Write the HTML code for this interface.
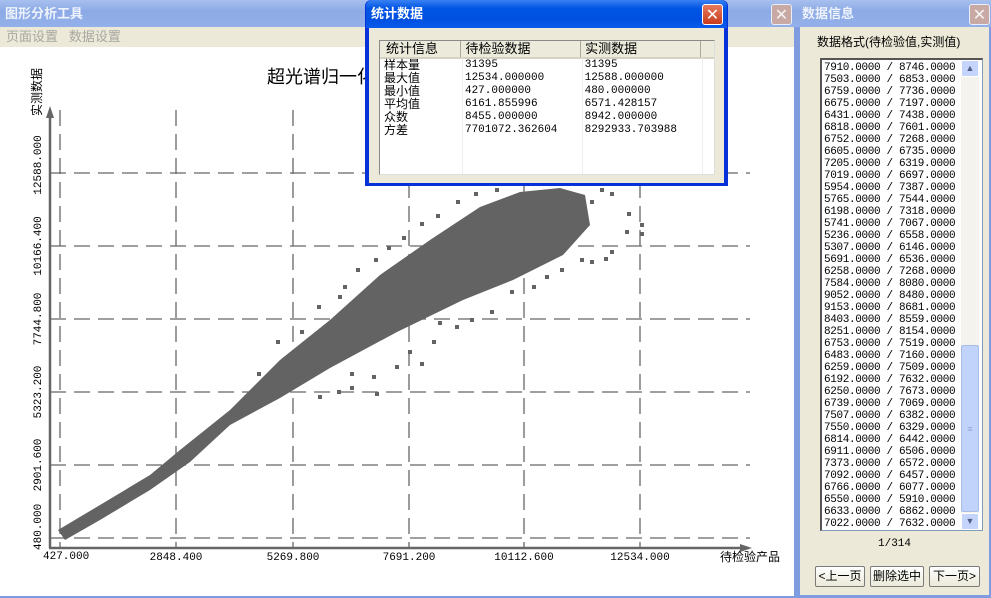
<!DOCTYPE html>
<html><head><meta charset="utf-8"><style>
*{margin:0;padding:0;box-sizing:border-box}
body{width:991px;height:598px;position:relative;overflow:hidden;background:#ece9d8;font-family:"Liberation Sans","Noto Sans CJK SC",sans-serif;}
.abs{position:absolute}
.tb{font-weight:bold;color:#fff;font-size:13px;padding-left:5px;line-height:27px;}
.inact{background:linear-gradient(#a8c0ef,#8daae6 40%,#93b0ea);color:#eef3fc}
.act{background:linear-gradient(#3a81f3,#0055e5 30%,#0050e0 70%,#0a5bec);}
.xb{position:absolute;width:21px;height:21px;border-radius:3px;border:1px solid #fff;color:#fff;font-size:16px;line-height:19px;text-align:center;font-weight:bold;font-family:"DejaVu Sans",sans-serif}
.mono{font-family:"Liberation Mono","Noto Sans CJK SC",monospace;}
table{border-collapse:collapse}
.btn{position:absolute;top:566px;height:21px;border:1px solid #7a7a7a;border-radius:2px;background:linear-gradient(#fff,#ece9d8);font-size:12px;text-align:center;line-height:19px}
</style></head><body>
<div class="abs" style="left:0;top:0;width:797px;height:598px;background:#7f9ce0"></div>
<div class="abs tb inact" style="left:0;top:0;width:797px;height:27px;">图形分析工具</div>
<div class="xb" style="left:771px;top:4px;background:#c9a9a4;border-color:#e8eefa;color:#f4f4f4">✕</div>
<div class="abs" style="left:0;top:27px;width:794px;height:20px;background:#ece9d8;color:#a7a6a0;font-size:13px;line-height:20px;padding-left:6px">页面设置&nbsp;&nbsp;&nbsp;数据设置</div>
<div class="abs" style="left:0;top:47px;width:794px;height:549px;background:#fff"></div>
<svg class="abs" style="left:0;top:0" width="794" height="596">
<g stroke="#666" stroke-width="1.3" stroke-dasharray="16,8" fill="none">
<line x1="50" y1="173" x2="750" y2="173"/><line x1="50" y1="246" x2="750" y2="246"/><line x1="50" y1="319" x2="750" y2="319"/><line x1="50" y1="392" x2="750" y2="392"/><line x1="50" y1="465" x2="750" y2="465"/><line x1="50" y1="538" x2="750" y2="538"/>
<line x1="60" y1="110" x2="60" y2="548"/><line x1="176" y1="110" x2="176" y2="548"/><line x1="293" y1="110" x2="293" y2="548"/><line x1="409" y1="110" x2="409" y2="548"/><line x1="524" y1="110" x2="524" y2="548"/><line x1="640" y1="110" x2="640" y2="548"/>
</g>
<g stroke="#666" stroke-width="2.5"><line x1="50" y1="112" x2="50" y2="548"/><line x1="49" y1="548" x2="748" y2="548"/></g>
<polygon points="50,106 46,118 54,118" fill="#666"/><polygon points="752,548 740,544 740,552" fill="#666"/>
<polygon fill="#636363" points="58,530 100,505 150,475 180,450 230,410 280,360 330,320 380,275 430,240 480,207 520,192 560,188 585,195 590,225 563,255 513,280 463,300 397,332 330,368 280,398 230,425 190,462 150,490 100,520 65,540"/>
<g fill="#636363">
<rect x="276" y="340" width="4" height="4"/><rect x="300" y="330" width="4" height="4"/><rect x="317" y="305" width="4" height="4"/><rect x="338" y="295" width="4" height="4"/><rect x="356" y="268" width="4" height="4"/><rect x="343" y="285" width="4" height="4"/><rect x="374" y="258" width="4" height="4"/><rect x="387" y="246" width="4" height="4"/><rect x="402" y="236" width="4" height="4"/><rect x="420" y="222" width="4" height="4"/><rect x="436" y="214" width="4" height="4"/><rect x="456" y="200" width="4" height="4"/><rect x="474" y="192" width="4" height="4"/><rect x="495" y="188" width="4" height="4"/>
<rect x="590" y="200" width="4" height="4"/><rect x="600" y="188" width="4" height="4"/><rect x="610" y="192" width="4" height="4"/><rect x="625" y="230" width="4" height="4"/><rect x="627" y="212" width="4" height="4"/><rect x="640" y="223" width="4" height="4"/><rect x="604" y="257" width="4" height="4"/><rect x="580" y="258" width="4" height="4"/><rect x="590" y="260" width="4" height="4"/><rect x="610" y="250" width="4" height="4"/><rect x="560" y="268" width="4" height="4"/><rect x="545" y="275" width="4" height="4"/><rect x="532" y="285" width="4" height="4"/>
<rect x="490" y="310" width="4" height="4"/><rect x="470" y="318" width="4" height="4"/><rect x="455" y="325" width="4" height="4"/><rect x="432" y="340" width="4" height="4"/><rect x="438" y="321" width="4" height="4"/><rect x="408" y="350" width="4" height="4"/><rect x="395" y="365" width="4" height="4"/><rect x="420" y="362" width="4" height="4"/><rect x="372" y="375" width="4" height="4"/><rect x="350" y="372" width="4" height="4"/><rect x="375" y="392" width="4" height="4"/><rect x="337" y="390" width="4" height="4"/><rect x="318" y="395" width="4" height="4"/><rect x="350" y="386" width="4" height="4"/><rect x="257" y="372" width="4" height="4"/><rect x="273" y="385" width="4" height="4"/><rect x="510" y="290" width="4" height="4"/><rect x="450" y="300" width="4" height="4"/><rect x="640" y="232" width="4" height="4"/>
</g>
<g font-family="Liberation Mono,monospace" font-size="11" fill="#000">
<text x="43" y="559" text-anchor="start">427.000</text>
<text x="176" y="560" text-anchor="middle">2848.400</text><text x="293" y="560" text-anchor="middle">5269.800</text><text x="409" y="560" text-anchor="middle">7691.200</text><text x="524" y="560" text-anchor="middle">10112.600</text><text x="640" y="560" text-anchor="middle">12534.000</text>
<text transform="translate(41,550) rotate(-90)">480.000</text>
<text transform="translate(41,465) rotate(-90)" text-anchor="middle">2901.600</text>
<text transform="translate(41,392) rotate(-90)" text-anchor="middle">5323.200</text>
<text transform="translate(41,319) rotate(-90)" text-anchor="middle">7744.800</text>
<text transform="translate(41,246) rotate(-90)" text-anchor="middle">10166.400</text>
<text transform="translate(41,165) rotate(-90)" text-anchor="middle">12588.000</text>
</g>
<text x="720" y="561" font-size="12" font-family="Liberation Sans,Noto Sans CJK SC,sans-serif">待检验产品</text>
<text transform="translate(41,92) rotate(-90)" text-anchor="middle" font-size="12" font-family="Liberation Sans,Noto Sans CJK SC,sans-serif">实测数据</text>
<text x="267" y="83" font-size="18" font-family="Liberation Sans,Noto Sans CJK SC,sans-serif">超光谱归一化</text>
</svg>
<div class="abs" style="left:365px;top:0;width:363px;height:186px;background:#0831d9;border-radius:6px 6px 0 0"></div>
<div class="abs tb act" style="left:366px;top:0;width:361px;height:28px;border-radius:6px 6px 0 0;line-height:28px">统计数据</div>
<div class="xb" style="left:702px;top:4px;background:linear-gradient(#e77a5e,#c83b1c)">✕</div>
<div class="abs" style="left:369px;top:28px;width:355px;height:155px;background:#ece9d8"></div>
<div class="abs" style="left:379px;top:40px;width:336px;height:135px;background:#fff;border:1px solid #8a8a8a;border-right-color:#ddd;border-bottom-color:#ddd;overflow:hidden">
<table style="font-size:12px;line-height:12px">
<tr style="height:17px;background:#ebeadb;font-size:13px"><td style="width:82px;padding-left:6px;border-right:1px solid #aca899;border-bottom:2px solid #d6d2c2">统计信息</td><td style="width:120px;padding-left:4px;border-right:1px solid #aca899;border-bottom:2px solid #d6d2c2">待检验数据</td><td style="width:120px;padding-left:4px;border-right:1px solid #aca899;border-bottom:2px solid #d6d2c2">实测数据</td><td style="width:14px;border-bottom:2px solid #d6d2c2"></td></tr>
<tr style="height:13px"><td style="padding-left:4px">样本量</td><td class="mono" style="padding-left:4px;font-size:11px">31395</td><td class="mono" style="padding-left:4px;font-size:11px">31395</td><td></td></tr>
<tr style="height:13px"><td style="padding-left:4px">最大值</td><td class="mono" style="padding-left:4px;font-size:11px">12534.000000</td><td class="mono" style="padding-left:4px;font-size:11px">12588.000000</td><td></td></tr>
<tr style="height:13px"><td style="padding-left:4px">最小值</td><td class="mono" style="padding-left:4px;font-size:11px">427.000000</td><td class="mono" style="padding-left:4px;font-size:11px">480.000000</td><td></td></tr>
<tr style="height:13px"><td style="padding-left:4px">平均值</td><td class="mono" style="padding-left:4px;font-size:11px">6161.855996</td><td class="mono" style="padding-left:4px;font-size:11px">6571.428157</td><td></td></tr>
<tr style="height:13px"><td style="padding-left:4px">众数</td><td class="mono" style="padding-left:4px;font-size:11px">8455.000000</td><td class="mono" style="padding-left:4px;font-size:11px">8942.000000</td><td></td></tr>
<tr style="height:13px"><td style="padding-left:4px">方差</td><td class="mono" style="padding-left:4px;font-size:11px">7701072.362604</td><td class="mono" style="padding-left:4px;font-size:11px">8292933.703988</td><td></td></tr>
</table>
<div class="abs" style="left:82px;top:17px;width:1px;height:120px;background:#eee"></div>
<div class="abs" style="left:202px;top:17px;width:1px;height:120px;background:#eee"></div>
<div class="abs" style="left:322px;top:17px;width:1px;height:120px;background:#eee"></div>
</div>
<div class="abs" style="left:797px;top:0;width:194px;height:598px;background:#7f9ce0"></div>
<div class="abs tb inact" style="left:797px;top:0;width:194px;height:27px">数据信息</div>
<div class="xb" style="left:969px;top:4px;background:#c9a9a4;border-color:#e8eefa;color:#f4f4f4">✕</div>
<div class="abs" style="left:800px;top:27px;width:189px;height:568px;background:#ece9d8"></div>
<div class="abs" style="left:817px;top:33px;font-size:12px">数据格式(待检验值,实测值)</div>
<div class="abs mono" style="left:820px;top:58px;width:163px;height:473px;background:#fff;border:1px solid #7f9db9;border-left:2px solid #555;border-top:2px solid #555;font-size:11px;line-height:12px;padding:2px 0 0 2px;white-space:pre;letter-spacing:-0.35px">7910.0000 / 8746.0000
7503.0000 / 6853.0000
6759.0000 / 7736.0000
6675.0000 / 7197.0000
6431.0000 / 7438.0000
6818.0000 / 7601.0000
6752.0000 / 7268.0000
6605.0000 / 6735.0000
7205.0000 / 6319.0000
7019.0000 / 6697.0000
5954.0000 / 7387.0000
5765.0000 / 7544.0000
6198.0000 / 7318.0000
5741.0000 / 7067.0000
5236.0000 / 6558.0000
5307.0000 / 6146.0000
5691.0000 / 6536.0000
6258.0000 / 7268.0000
7584.0000 / 8080.0000
9052.0000 / 8480.0000
9153.0000 / 8681.0000
8403.0000 / 8559.0000
8251.0000 / 8154.0000
6753.0000 / 7519.0000
6483.0000 / 7160.0000
6259.0000 / 7509.0000
6192.0000 / 7632.0000
6250.0000 / 7673.0000
6739.0000 / 7069.0000
7507.0000 / 6382.0000
7550.0000 / 6329.0000
6814.0000 / 6442.0000
6911.0000 / 6506.0000
7373.0000 / 6572.0000
7092.0000 / 6457.0000
6766.0000 / 6077.0000
6550.0000 / 5910.0000
6633.0000 / 6862.0000
7022.0000 / 7632.0000</div>
<div class="abs" style="left:961px;top:60px;width:18px;height:470px;background:#f4f3ee"></div>
<div class="abs" style="left:961px;top:60px;width:18px;height:17px;background:#c4d4fa;border:1px solid #fff;border-radius:2px;color:#4d6185;font-size:9px;text-align:center;line-height:15px">▲</div>
<div class="abs" style="left:961px;top:345px;width:18px;height:167px;background:#c2d3fb;border:1px solid #a9bde8;border-radius:2px;color:#8fa6d8;font-size:9px;text-align:center;line-height:167px">≡</div>
<div class="abs" style="left:961px;top:513px;width:18px;height:17px;background:#c4d4fa;border:1px solid #fff;border-radius:2px;color:#4d6185;font-size:9px;text-align:center;line-height:15px">▼</div>
<div class="abs mono" style="left:878px;top:538px;font-size:11px">1/314</div>
<div class="btn" style="left:815px;width:50px">&lt;上一页</div>
<div class="btn" style="left:870px;width:54px">删除选中</div>
<div class="btn" style="left:929px;width:51px">下一页&gt;</div>
</body></html>
